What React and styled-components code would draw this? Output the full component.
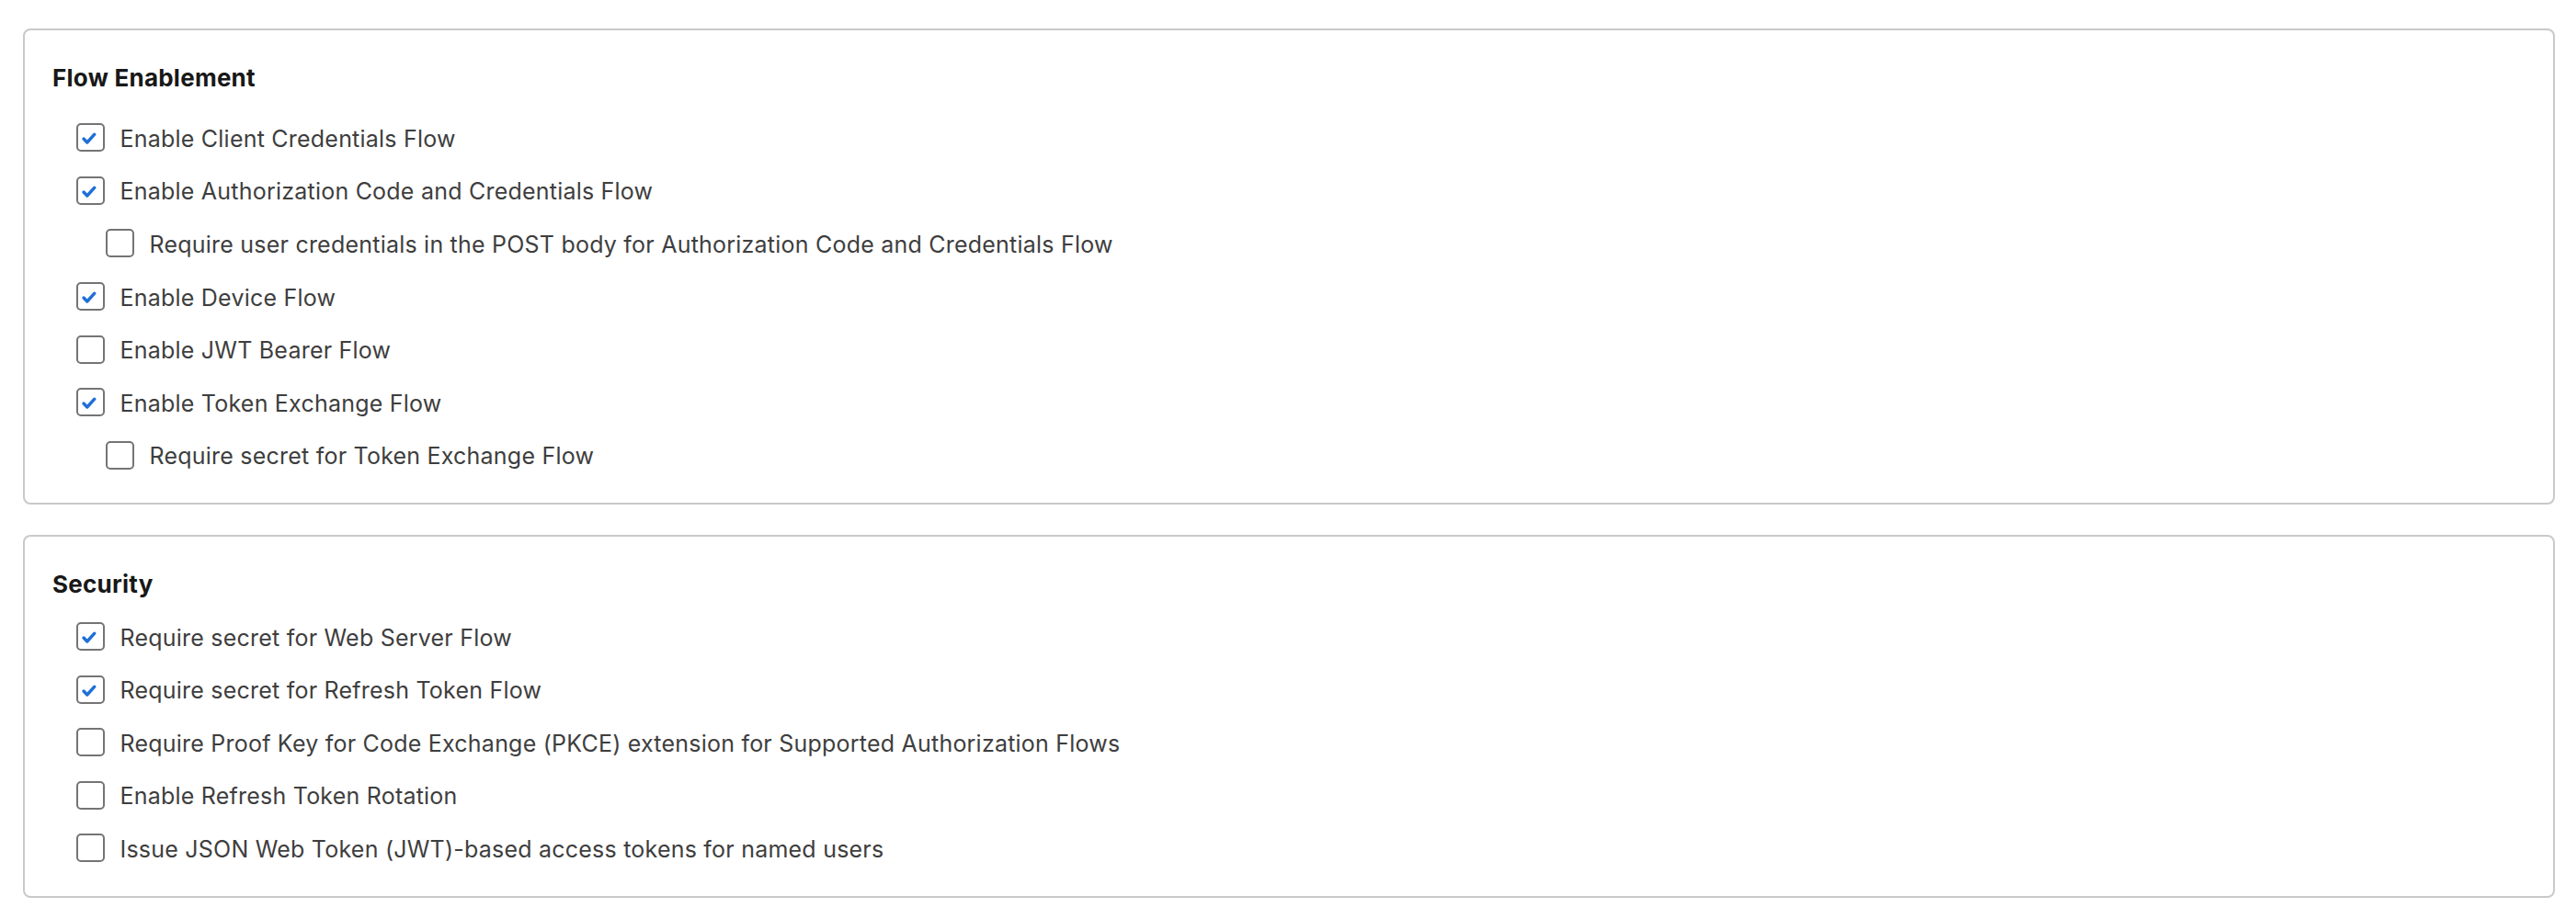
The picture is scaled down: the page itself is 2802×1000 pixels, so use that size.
import React from "react";
import styled, { createGlobalStyle } from "styled-components";

const GlobalStyle = createGlobalStyle`
  html, body {
    margin: 0;
    padding: 0;
    background: #ffffff;
  }
  body {
    font-family: Inter, "Noto Sans", "Liberation Sans", sans-serif;
    -webkit-font-smoothing: antialiased;
  }
`;

const Page = styled.div`
  display: flex;
  flex-direction: column;
  gap: 32.7px;
  padding: 31px 23px 0 25px;
`;

const Card = styled.section`
  border: 2px solid #c9c9c9;
  border-radius: 8px;
  background: #ffffff;
  padding: 35.7px 30px 23px 30px;
  display: flex;
  flex-direction: column;
`;

const Heading = styled.h2`
  margin: 0 0 ${(p) => p.$gap}px 0;
  font-family: Inter, "Noto Sans", "Liberation Sans", sans-serif;
  font-size: 26px;
  line-height: 32px;
  font-weight: 700;
  letter-spacing: 0.25px;
  color: #181818;
`;

const List = styled.div`
  display: flex;
  flex-direction: column;
  padding-left: 26px;
`;

const Row = styled.label`
  display: flex;
  align-items: center;
  gap: 16.5px;
  height: 57.6px;
  padding-left: ${(p) => (p.$nested ? 32 : 0)}px;
  font-size: 25px;
  letter-spacing: 0.22px;
  color: #3e3e3e;
  cursor: pointer;
`;

const Box = styled.span`
  flex: none;
  box-sizing: border-box;
  width: 31px;
  height: 31px;
  border: 2px solid #747474;
  border-radius: 5px;
  background: #ffffff;
  display: flex;
  align-items: center;
  justify-content: center;
`;

const Check = styled.svg`
  width: 27px;
  height: 27px;
  display: block;
`;

const LabelText = styled.span`
  white-space: nowrap;
  line-height: 31px;
  padding-top: 3px;
`;

function Checkbox({ checked }) {
  return (
    <Box>
      {checked && (
        <Check viewBox="0 0 27 27">
          <path
            d="M6 15 L9.8 19 L17.8 10.2"
            fill="none"
            stroke="#1f6fd8"
            strokeWidth="3.4"
            strokeLinecap="round"
            strokeLinejoin="round"
          />
        </Check>
      )}
    </Box>
  );
}

const sections = [
  {
    title: "Flow Enablement",
    gap: 20.3,
    items: [
      { label: "Enable Client Credentials Flow", checked: true },
      { label: "Enable Authorization Code and Credentials Flow", checked: true },
      {
        label:
          "Require user credentials in the POST body for Authorization Code and Credentials Flow",
        checked: false,
        nested: true,
      },
      { label: "Enable Device Flow", checked: true },
      { label: "Enable JWT Bearer Flow", checked: false },
      { label: "Enable Token Exchange Flow", checked: true },
      { label: "Require secret for Token Exchange Flow", checked: false, nested: true },
    ],
  },
  {
    title: "Security",
    gap: 12.3,
    items: [
      { label: "Require secret for Web Server Flow", checked: true },
      { label: "Require secret for Refresh Token Flow", checked: true },
      {
        label:
          "Require Proof Key for Code Exchange (PKCE) extension for Supported Authorization Flows",
        checked: false,
      },
      { label: "Enable Refresh Token Rotation", checked: false },
      { label: "Issue JSON Web Token (JWT)-based access tokens for named users", checked: false },
    ],
  },
];

export default function App() {
  return (
    <>
      <GlobalStyle />
      <Page>
        {sections.map((s) => (
          <Card key={s.title}>
            <Heading $gap={s.gap}>{s.title}</Heading>
            <List>
              {s.items.map((it) => (
                <Row key={it.label} $nested={it.nested}>
                  <Checkbox checked={it.checked} />
                  <LabelText>{it.label}</LabelText>
                </Row>
              ))}
            </List>
          </Card>
        ))}
      </Page>
    </>
  );
}
